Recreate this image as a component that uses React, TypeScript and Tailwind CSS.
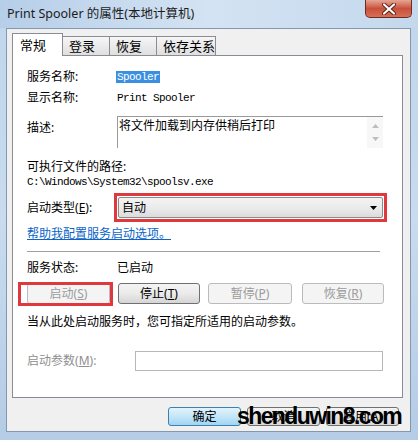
import type { ReactNode } from 'react';

// ─── Small pieces ────────────────────────────────────────────────────────────

const mono = "font-['Liberation_Mono',monospace] text-[11px] tracking-[-0.6px]";

function Key({ k }: { k: string }) {
  return (
    <span>
      (<span className="underline">{k}</span>)
    </span>
  );
}

function Btn({ children, disabled, w = 'w-[82px]' }: { children: ReactNode; disabled?: boolean; w?: string }) {
  return (
    <div
      className={`${w} h-[21px] flex items-center justify-center rounded-[3px] border ${
        disabled
          ? 'border-[#b9bcbf] bg-[#f4f4f4] text-[#9b9b9b]'
          : 'border-[#707070] bg-gradient-to-b from-[#f4f4f4] via-[#ebebeb] to-[#d5d5d5] text-black'
      }`}
    >
      {children}
    </div>
  );
}

function Tab({ label, active, w }: { label: string; active?: boolean; w: string }) {
  if (active) {
    return (
      <div className={`${w} h-[23px] -mb-px z-10 bg-white border border-b-0 border-[#898c95] flex items-start pt-[3px] pl-[7px] text-[13px]`}>
        {label}
      </div>
    );
  }
  return (
    <div className={`${w} h-[19px] mt-[3px] -ml-px bg-gradient-to-b from-[#f6f6f6] to-[#dfdfdf] border border-b-0 border-[#898c95] flex items-center pl-[6px] text-[13px]`}>
      {label}
    </div>
  );
}

// ─── Dialog ──────────────────────────────────────────────────────────────────

export default function App() {
  return (
    <div className="relative w-[418px] h-[440px] overflow-hidden bg-gradient-to-b from-[#c0d6ec] via-[#c8dbef] to-[#b5cce6] font-['Noto_Sans','Noto_Sans_CJK_SC',sans-serif] text-[12px] leading-[16px] text-black">
      {/* Title bar */}
      <div className="flex h-[28px] bg-gradient-to-r from-[#b6cee8] via-[#d4e3f3] to-[#c4d8ed]">
        <span className="pl-[7px] pt-[6px] text-[12.5px] text-[#1c1c1c]">Print Spooler 的属性(本地计算机)</span>
        <div className="ml-auto mr-[6px] w-[47px] h-[18px] rounded-b-[5px] border border-t-0 border-[#6b2a24] bg-gradient-to-b from-[#e6a595] via-[#c8503b] to-[#d77058] flex items-center justify-center">
          <svg width="14" height="12" viewBox="0 0 14 12">
            <path d="M2 1.5 L12 10.5 M12 1.5 L2 10.5" stroke="#5b2019" strokeWidth="4" strokeLinecap="round" />
            <path d="M2 1.5 L12 10.5 M12 1.5 L2 10.5" stroke="#ffffff" strokeWidth="2.2" strokeLinecap="round" />
          </svg>
        </div>
      </div>

      {/* Client area */}
      <div className="ml-[6px] w-[405px] h-[404px] border border-[#8397ad] bg-[#f0f0f0] flex flex-col pl-[5px] pt-[4px]">
        {/* Tabs */}
        <div className="flex items-start h-[22px]">
          <Tab label="常规" active w="w-[51px]" />
          <Tab label="登录" w="w-[48px]" />
          <Tab label="恢复" w="w-[48px]" />
          <Tab label="依存关系" w="w-[60px]" />
        </div>

        {/* Panel */}
        <div className="w-[391px] h-[343px] border border-[#898c95] bg-white flex flex-col px-[14px]">
          <div className="mt-[13px] flex items-center h-[16px]">
            <span className="w-[89px]">服务名称:</span>
            <span className={`${mono} bg-[#3b8fe3] text-white px-px leading-[12px]`}>Spooler</span>
          </div>

          <div className="mt-[5px] flex items-center h-[16px]">
            <span className="w-[90px]">显示名称:</span>
            <span className={mono}>Print Spooler</span>
          </div>

          <div className="mt-[10px] flex items-start h-[32px]">
            <span className="w-[90px] pt-[4px]">描述:</span>
            <div className="w-[266px] h-[32px] border-t border-l border-[#9a9a9a] flex">
              <span className="flex-1 pl-[1px] pt-[1px]">将文件加载到内存供稍后打印</span>
              <div className="w-[16px] bg-[#f7f7f7] flex flex-col items-center justify-around py-[3px]">
                <svg width="7" height="4" viewBox="0 0 7 4"><path d="M0 4 L3.5 0 L7 4 Z" fill="#bdbdbd" /></svg>
                <svg width="7" height="4" viewBox="0 0 7 4"><path d="M0 0 L3.5 4 L7 0 Z" fill="#bdbdbd" /></svg>
              </div>
            </div>
          </div>

          <div className="mt-[11px] h-[16px]">可执行文件的路径:</div>
          <div className={`${mono} h-[14px] leading-[14px]`}>C:\Windows\System32\spoolsv.exe</div>

          <div className="mt-[4px] flex items-center h-[29px]">
            <span className="w-[87px]">
              启动类型<Key k="E" />:
            </span>
            <div className="w-[273px] h-[29px] border-[3px] border-[#e0393d] p-px">
              <div className="h-[21px] rounded-[2px] border border-[#8a8a8a] bg-gradient-to-b from-[#f3f3f3] via-[#ebebeb] to-[#dcdcdc] flex items-center pl-[3px] pr-[5px]">
                <span className="flex-1">自动</span>
                <svg width="7" height="4" viewBox="0 0 7 4"><path d="M0 0 L7 0 L3.5 4 Z" fill="#000" /></svg>
              </div>
            </div>
          </div>

          <div className="mt-[4px] h-[16px]">
            <span className="text-[#0a64c8] underline">帮助我配置服务启动选项。</span>
          </div>

          <div className="mt-[9px] w-[353px] h-px bg-[#a0a0a0]" />

          <div className="mt-[8px] flex items-center h-[16px]">
            <span className="w-[90px]">服务状态:</span>
            <span>已启动</span>
          </div>

          <div className="relative mt-[7px] flex gap-[8px]">
            <Btn disabled w="w-[83px]">
              启动<Key k="S" />
            </Btn>
            <Btn>
              停止<Key k="T" />
            </Btn>
            <Btn disabled w="w-[84px]">
              暂停<Key k="P" />
            </Btn>
            <div className="ml-[2px]">
              <Btn disabled>
                恢复<Key k="R" />
              </Btn>
            </div>
            <div className="absolute -left-[9px] -top-[1px] w-[95px] h-[24px] border-[3px] border-[#e0393d]" />
          </div>

          <div className="mt-[10px] h-[16px]">当从此处启动服务时，您可指定所适用的启动参数。</div>

          <div className="mt-[21px] flex items-center h-[20px]">
            <span className="w-[108px] text-[#8f8f8f]">
              启动参数<Key k="M" />:
            </span>
            <div className="w-[248px] h-[20px] border border-[#b5b8bd] bg-white" />
          </div>
        </div>

        {/* Dialog buttons */}
        <div className="mt-[9px] flex justify-end gap-[6px] pr-[11px]">
          <div className="w-[73px] h-[19px] rounded-[3px] border border-[#3c7fb1] bg-gradient-to-b from-[#e3f3fc] via-[#c4e6f9] to-[#9fd5f3] flex items-center justify-center">
            确定
          </div>
          <div className="w-[73px] h-[19px] rounded-[3px] border border-[#707070] bg-gradient-to-b from-[#f4f4f4] to-[#d8d8d8] flex items-center justify-center">
            取消
          </div>
          <div className="w-[73px] h-[19px] rounded-[3px] border border-[#707070] bg-gradient-to-b from-[#f4f4f4] to-[#d8d8d8] flex items-center justify-center">
            应用(A)
          </div>
        </div>
      </div>

      {/* Watermark */}
      <div className="absolute left-[237px] top-[405px] font-['Liberation_Sans',sans-serif] font-bold text-[23px] leading-[23px] tracking-[-1.6px] text-black">
        shenduwin8.com
      </div>
    </div>
  );
}
